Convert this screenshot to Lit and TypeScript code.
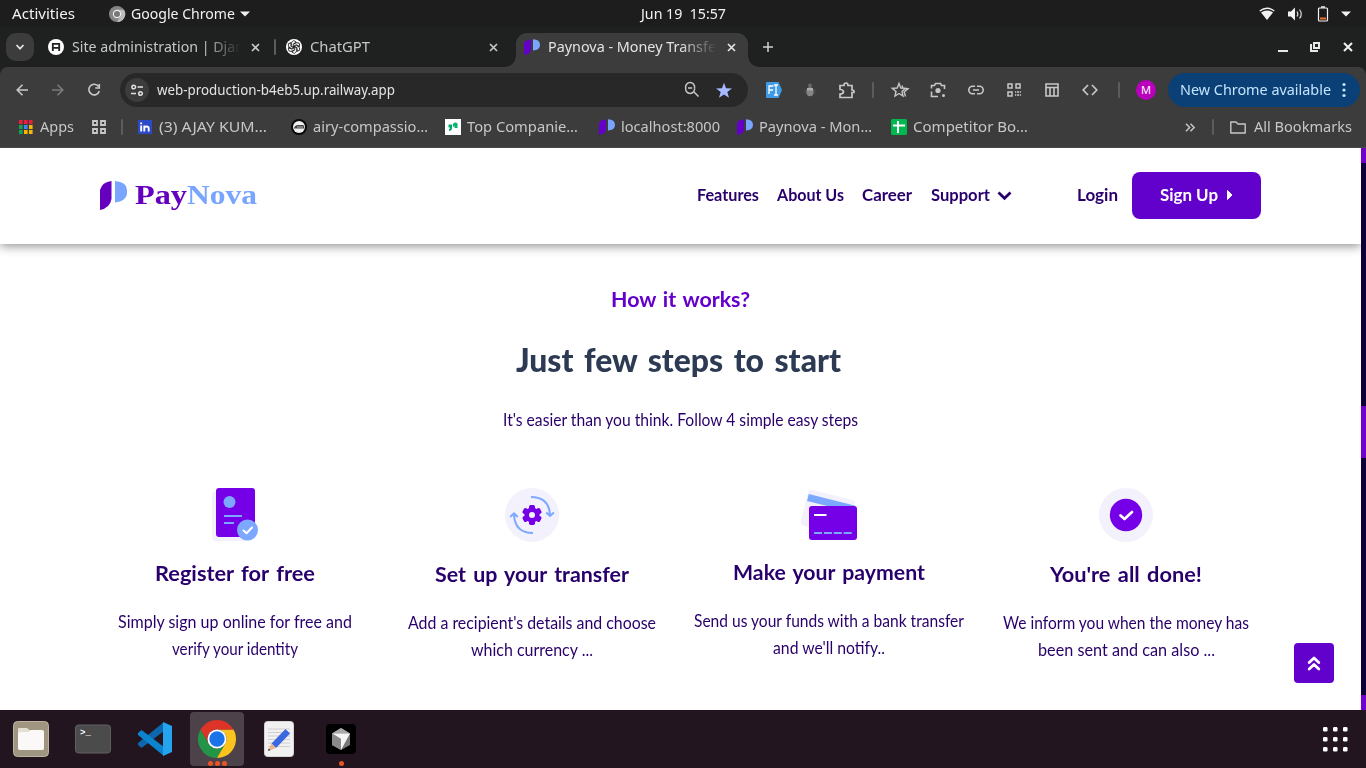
import { LitElement, html, svg, css } from 'lit';
import { customElement, property } from 'lit/decorators.js';

/** A run of text that is condensed or expanded to a known width. */
@customElement('fit-text')
class FitText extends LitElement {
  @property() text = '';
  @property({ type: Number }) w = 0;
  static styles = css`
    :host { display: block; white-space: pre; flex: none; }
    .run { display: inline-block; transform-origin: 0 50%; white-space: pre; }
  `;
  render() {
    return html`<span class="run">${this.text}</span>`;
  }
  updated() {
    const run = this.renderRoot.querySelector('.run') as HTMLElement;
    run.style.transform = 'none';
    const natural = run.getBoundingClientRect().width;
    this.style.width = `${this.w}px`;
    run.style.transform = `scaleX(${this.w / natural})`;
  }
}

const t = (text: string, w: number, cls = '') => html`<fit-text class=${cls} .text=${text} .w=${w}></fit-text>`;
const icon = (w: number, h: number, body: unknown, cls = '') =>
  html`<svg class="ic ${cls}" width=${w} height=${h} viewBox="0 0 ${w} ${h}">${body}</svg>`;

const paynova = () => icon(16, 16, svg`
  <path fill="#6500c9" d="M0 16V4.5Q.5 1 7 .5V11Q6.500 15 0 16Z"/>
  <path fill="#79a5ff" d="M9 .3Q16 .5 16 6Q16 11 9 11.500Z"/>`);
const cross = (cls = '') => icon(9, 9, svg`<path d="M1 1 8 8M8 1 1 8" stroke="currentColor" stroke-width="1.7" fill="none"/>`, cls);
const triangle = () => icon(10, 6, svg`<path d="M0 .5H10L5 5.500Z" fill="#f2f2f2"/>`);
const rule = () => html`<i class="rule"></i>`;

const registerIcon = icon(46, 53, svg`
  <rect x="0" y="4" width="38" height="49" rx="3" fill="#f3f1fb"/>
  <rect x="4" y="0" width="39" height="49" rx="3" fill="#7500e8"/>
  <circle cx="17.500" cy="14" r="6" fill="#7da8ff"/>
  <path d="M12 28H30M12 35H22" stroke="#7da8ff" stroke-width="1.8"/>
  <circle cx="35.500" cy="42" r="10.500" fill="#7da8ff"/>
  <path d="M31.500 42.500 34.500 45.300 40 39.500" stroke="#fff" stroke-width="2" fill="none" stroke-linecap="round" stroke-linejoin="round"/>`);
const teeth = [0, 60, 120, 180, 240, 300];
const transferIcon = icon(54, 54, svg`
  <circle cx="27" cy="27" r="27" fill="#f3f1fb"/>
  <g fill="#7500e8"><circle cx="27" cy="27" r="7.600"/>
  ${teeth.map((a) => svg`<rect x="24" y="17" width="6" height="7" rx="1.700" transform="rotate(${a} 27 27)"/>`)}</g>
  <circle cx="27" cy="27" r="3" fill="#f3f1fb"/>
  <path d="M26 9Q44 9 45 27M41.200 24.500 45 28 49 24.500M28 45Q10 45 9 27M5.200 29 9 25.300 12.800 29" fill="none" stroke="#7da8ff" stroke-width="2"/>`);
const paymentIcon = icon(56, 52, svg`
  <g transform="rotate(14 8 1)"><rect x="8" y="1" width="48" height="37" rx="4" fill="#f3f1fb"/><rect x="9" y="6" width="48" height="7" fill="#7da8ff"/></g>
  <rect x="8" y="18" width="48" height="34" rx="3" fill="#7500e8"/>
  <path d="M13 27H25.500" stroke="#fff" stroke-width="2"/>
  <path d="M13 45H51" stroke="#7da8ff" stroke-width="1.800" stroke-dasharray="8 1.900"/>`);
const doneIcon = icon(54, 54, svg`
  <circle cx="27" cy="27" r="27" fill="#f3f1fb"/><circle cx="27" cy="27" r="16.200" fill="#7500e8"/>
  <path d="M21.500 27.500 25.500 31 33 24" fill="none" stroke="#fff" stroke-width="2.700" stroke-linecap="round" stroke-linejoin="round"/>`);

const steps = [
  { art: registerIcon, title: 'Register for free', w: 160, lines: [['Simply sign up online for free and', 234], ['verify your identity', 126]] },
  { art: transferIcon, title: 'Set up your transfer', w: 194, lines: [["Add a recipient's details and choose", 248], ['which currency ...', 122]] },
  { art: paymentIcon, title: 'Make your payment', w: 192, lines: [['Send us your funds with a bank transfer', 270], ["and we'll notify..", 112]] },
  { art: doneIcon, title: "You're all done!", w: 152, lines: [['We inform you when the money has', 246], ['been sent and can also ...', 177]] },
] as { art: unknown; title: string; w: number; lines: [string, number][] }[];

@customElement('app-root')
class AppRoot extends LitElement {
  static styles = css`
    :host { display: flex; flex-direction: column; width: 1366px; height: 768px; overflow: hidden;
      font: 14px/20px "Noto Sans", "Open Sans", sans-serif; color: #e3e3e3; background: #fff; }
    * { box-sizing: border-box; }
    .ic { display: block; flex: none; overflow: visible; }
    .rule { display: block; width: 2px; height: 16px; background: #5c5c5c; border-radius: 1px; }
    .row { display: grid; align-items: center; flex: none; }

    .system { height: 27px; padding-left: 12px; background: #1d1d1d; color: #f2f2f2;
      grid-template-columns: 97px 22px 109px 401px 618px 29px 29px 24px 25px; }
    .tabs { height: 40px; background: #1f2120; color: #c7c7c7; padding-left: 6px;
      grid-template-columns: 42px 24px 179px 23px 12px 24px 179px 27px 247px 515px 32px 33px 23px; }
    .menu { width: 28px; height: 28px; border-radius: 10px; background: #3c3c3c; display: grid; place-items: center; }
    .fade { width: 173px; overflow: hidden; mask-image: linear-gradient(90deg, #000 132px, transparent 169px); }
    .tab { position: relative; height: 34px; align-self: end; width: 232px; background: #3c3c3c; border-radius: 11px 11px 0 0;
      display: grid; align-items: center; padding: 0 0 6px 8px; grid-template-columns: 24px 179px 20px; color: #e3e3e3; }
    .tab::before, .tab::after { content: ""; position: absolute; bottom: 0; width: 11px; height: 11px; }
    .tab::before { left: -11px; background: radial-gradient(circle at 0 0, transparent 10.5px, #3c3c3c 11px); }
    .tab::after { right: -11px; background: radial-gradient(circle at 100% 0, transparent 10.5px, #3c3c3c 11px); }

    .chrome { background: #3c3c3c; border-radius: 8px 8px 0 0; flex: none; height: 81px; border-bottom: 1px solid #4a4a4a; }
    .under { background: #1f2120; flex: none; }
    .toolbar { height: 46px; color: #c7c7c7; padding-left: 16px;
      grid-template-columns: 36px 35px 33px 646px 39px 33px 34px 19px 39px 38px 39px 38px 37px 36px 18px 32px 192px; }
    .omnibox { width: 628px; height: 34px; border-radius: 17px; background: #282828; display: grid; align-items: center;
      padding-left: 5px; grid-template-columns: 32px 528px 31px 20px; color: #e3e3e3; }
    .site { width: 24px; height: 24px; border-radius: 50%; background: #3c3c3c; display: grid; place-items: center; }
    .avatar { width: 20px; height: 20px; border-radius: 50%; background: #b900bd; color: #fff; font-size: 11px; text-align: center; }
    .update { height: 34px; border-radius: 17px; background: #0b4077; color: #c4e3fc; display: grid; align-items: center;
      padding-left: 12px; grid-template-columns: 162px 10px; }
    .bookmarks { height: 28px; color: #c7c7c7; padding-left: 19px;
      grid-template-columns: 21px 52px 29px 17px 21px 132px 22px 132px 22px 132px 22px 116px 22px 132px 22px 272px 27px 18px 24px 100px; }

    .main { display: grid; grid-template-columns: 1361px 5px; height: 562px; flex: none; position: relative; }
    .page { font-family: Lato, sans-serif; color: #29006b; overflow: hidden; background: #fff; }
    .header { height: 96px; background: #fff; box-shadow: 0 2px 10px rgba(0, 0, 0, .45); padding: 0 0 2px 100px;
      grid-template-columns: 35px 52px 510px 80px 85px 68.5px 66.5px 80px 55px 129px; font-size: 17px; font-weight: 700; }
    .brand { font: 700 28px/34px "Liberation Serif", serif; color: #6500bf; }
    .nova { color: #79a5ff; }
    .signup { height: 47px; border-radius: 8px; background: #6200cc; color: #fff; display: grid; align-items: center;
      grid-template-columns: 66px 10px; padding-left: 28px; }
    .intro { display: flex; flex-direction: column; align-items: center; padding-top: 40px; }
    .eyebrow { font-size: 21px; line-height: 30px; font-weight: 700; color: #6500cc; word-spacing: 1.5px; }
    .title { font-size: 32px; line-height: 44px; font-weight: 900; color: #2d3a53; margin-top: 24px; margin-right: 4px; word-spacing: 3px; }
    .copy { font-size: 16.5px; line-height: 27px; }
    .lead { margin-top: 25px; }
    .steps { display: grid; grid-template-columns: repeat(4, 297px); padding: 54px 0 0 86.5px; }
    .step { display: flex; flex-direction: column; align-items: center; }
    .name { font-size: 21px; line-height: 30px; font-weight: 700; margin: 17px 0 21px; word-spacing: 2px; }
    .scroll { background: #0d0038; display: grid; grid-template-rows: 15px 52px 15px; align-content: space-between; }
    .cap { background: #7300cc; }
    .thumb { background: #7300cc; margin: 3px 0 -3px; }
    .totop { position: absolute; left: 1294px; top: 495px; width: 40px; height: 40px; border-radius: 4px; background: #6200cc;
      display: grid; place-items: center; }

    .dock { height: 58px; background: #22151f; display: flex; flex: none; align-items: center; }
    .app { width: 62px; height: 58px; display: grid; place-items: center; position: relative; }
    .active::before { content: ""; position: absolute; inset: 2px 4px; border-radius: 4px; background: #4d424a; }
    .app .ic { position: relative; }
    .dots { position: absolute; bottom: 2.500px; left: 0; right: 0; display: flex; justify-content: center; gap: 2px; }
    .dot { width: 5px; height: 5px; border-radius: 50%; background: #e95420; }
    .prompt { font: 700 9px "Liberation Mono", monospace; }
    .grid { margin-left: auto; margin-right: 19px; }
  `;

  system() {
    return html`<div class="row system">
      ${t('Activities', 63)}
      ${icon(16, 16, svg`<circle cx="8" cy="8" r="8" fill="#858585"/><path d="M8 3.700H15A8 8 0 0 1 8 16L11.500 10.200Z" fill="#bcbcbc"/><circle cx="8" cy="8" r="4.200" fill="#eee"/><circle cx="8" cy="8" r="3" fill="#777"/>`)}
      ${t('Google Chrome', 104)} ${triangle()} ${t('Jun 19  15:57', 85)}
      ${icon(16, 14, svg`<path d="M.7 4Q8-1.500 15.300 4" stroke="#f2f2f2" fill="none" stroke-width="1.300"/><path d="M2 5.500Q8 1.600 14 5.500L8 13Z" fill="#f2f2f2"/>`)}
      ${icon(15, 14, svg`<path d="M0 4.500H3L7 .5V13.500L3 9.500H0Z" fill="#f2f2f2"/><path d="M9 4.500Q10.700 7 9 9.500M11.500 2.500Q15 7 11.500 11.500" stroke="#ddd" fill="none" stroke-width="1.200"/>`)}
      ${icon(11, 16, svg`<rect x="1.500" y="2" width="9" height="13" rx="1" fill="none" stroke="#f2f2f2" stroke-width="1.200"/><path d="M4 1H8" stroke="#f2f2f2" stroke-width="1.500"/><rect x="3" y="11.500" width="6" height="2" fill="#f0702c"/>`)}
      ${triangle()}
    </div>`;
  }

  tabs() {
    return html`<div class="row tabs">
      <div class="menu">${icon(10, 6, svg`<path d="M1.500 1 5 4.700 8.500 1" stroke="#e3e3e3" stroke-width="1.700" fill="none"/>`)}</div>
      ${icon(16, 16, svg`<circle cx="8" cy="8" r="8" fill="#fff"/><path d="M4.800 12V4.800H11.200V12M4.800 8.800H11.200" stroke="#222" stroke-width="1.800" fill="none"/>`)}
      <div class="fade">${t('Site administration | Djan', 172)}</div> ${cross()} ${rule()}
      ${icon(16, 16, svg`<circle cx="8" cy="8" r="8" fill="#fff"/><g fill="none" stroke="#222" stroke-width=".9">${teeth.map((a) => svg`<path transform="rotate(${a} 8 8)" d="M5.300 6.700V4.300Q7-.2 10.200 3.200L7.200 5V9"/>`)}</g>`)}
      ${t('ChatGPT', 60)} ${cross()}
      <div class="tab">${paynova()}<div class="fade">${t('Paynova - Money Transfe', 168)}</div>${cross()}</div>
      ${icon(10, 10, svg`<path d="M5 0V10M0 5H10" stroke="#d0d0d0" stroke-width="1.500"/>`)}
      ${icon(10, 10, svg`<path d="M0 9H10" stroke="#e8e8e8" stroke-width="2"/>`)}
      ${icon(10, 10, svg`<path d="M4 1H9V6H4ZM1 2V9H8" stroke="#e8e8e8" stroke-width="2" fill="none"/>`)}
      ${icon(10, 10, svg`<path d="M1 1 9 9M9 1 1 9" stroke="#f0f0f0" stroke-width="2"/>`)}
    </div>`;
  }

  toolbar() {
    const s = (d: string, w = 1.6) => svg`<path d=${d} fill="none" stroke="currentColor" stroke-width=${w}/>`;
    return html`<div class="row toolbar">
      ${icon(12, 12, s('M12 6H1M6.500 .7 1.200 6 6.500 11.300'))}
      ${icon(12, 12, svg`<g opacity=".45">${s('M0 6H11M5.500 .7 10.800 6 5.500 11.300')}</g>`)}
      ${icon(14, 14, s('M11.500 3.500A5.300 5.300 0 1 0 12.300 8M12.300 1V5H8.300'))}
      <div class="omnibox">
        <div class="site">${icon(14, 12, s('M5.500 3A1.800 1.800 0 1 1 1.900 3A1.800 1.800 0 1 1 5.500 3M7.500 3H13M1 9.500H6M12.300 9.500A1.800 1.800 0 1 1 8.700 9.500A1.800 1.800 0 1 1 12.300 9.500', 1.5))}</div>
        ${t('web-production-b4eb5.up.railway.app', 238)}
        ${icon(14, 14, svg`<g color="#c7c7c7">${s('M9.500 5A4.500 4.500 0 1 1 .7 5A4.500 4.500 0 1 1 9.500 5M8.300 8.300 13.500 13.500M3 5H7.200', 1.5)}</g>`)}
        ${icon(16, 16, svg`<path d="M8 .8 10 6.200 16 6.400 11.300 10 13 15.700 8 12.400 3 15.700 4.700 10 0 6.400 6 6.200Z" fill="#a8baff"/>`)}
      </div>
      ${icon(16, 16, svg`<path d="M1 0H12.500L16 8 12.500 16H1Q0 16 0 15V1Q0 0 1 0Z" fill="#3f9be8"/><path d="M3 12V4H7.500M3 8H7M8 3H12M10 3V13M8 13H12" stroke="#fff" stroke-width="1.300" fill="none"/>`)}
      ${icon(10, 14, svg`<circle cx="5" cy="2.500" r="2" fill="#666"/><ellipse cx="5" cy="8.800" rx="3.600" ry="4.500" fill="#858585"/><rect x="2" y="5" width="6" height="2.500" fill="#aaa"/><path d="M0 6V11M10 6V11" stroke="#4c4c4c"/>`)}
      ${icon(17, 17, s('M2 3.500H6Q6 1 8 1Q10 1 10 3.500H14V8Q16.500 8 16 10.500H14V15.500H2V12Q5.500 12 5.500 9.500Q5 7.500 2 7.500Z', 1.7))}
      ${rule()}
      ${icon(18, 16, s('M8 1.500 9.800 6 14.500 6.300 11 9.500 12 14 8 11.500 4 14 5 9.500 1.300 6.300 6.200 6ZM11 3.500 12 6.200 17 6.800 13.200 10 14.500 14.500', 1.4))}
      ${icon(16, 16, svg`${s('M1.500 6.500V3.500H4.500L5.500 1.500H10.500L11.500 3.500H14.500V7M1.500 9.500V14.500H8', 1.6)}<circle cx="8" cy="8.500" r="2.600" fill="currentColor"/><circle cx="13.500" cy="13.500" r="1.500" fill="currentColor"/>`)}
      ${icon(16, 10, s('M7 1.300H4.500A3.500 3.500 0 0 0 4.500 8.700H7M9 1.300H11.500A3.500 3.500 0 0 1 11.500 8.700H9M5 5H11', 1.6))}
      ${icon(14, 14, svg`${s('M1 1H5V5H1ZM9 1H13V5H9ZM1 9H5V13H1Z', 1.5)}${s('M8 9H14M8 12H14', 1.5)}<path d="M9.500 8V14M12.500 8V14" stroke="#3c3c3c" stroke-width=".8"/>`)}
      ${icon(14, 14, s('M1 1H13V13H1ZM1 4.500H13M5 4.500V13M9 4.500V13', 1.6))}
      ${icon(16, 12, s('M6 1 1.200 6 6 11M10 1 14.800 6 10 11', 1.7))}
      ${rule()}
      <div class="avatar">M</div>
      <div class="update">${t('New Chrome available', 151)}${icon(4, 16, svg`<circle cx="2" cy="2.500" r="1.600" fill="#c4e3fc"/><circle cx="2" cy="8" r="1.600" fill="#c4e3fc"/><circle cx="2" cy="13.500" r="1.600" fill="#c4e3fc"/>`)}</div>
    </div>`;
  }

  bookmarks() {
    const colors = ['#f01c3c', '#f01c3c', '#f01c3c', '#10a651', '#4285f4', '#fbb600', '#10a651', '#fbb600', '#fbb600'];
    return html`<div class="row bookmarks">
      ${icon(14, 14, colors.map((c, i) => svg`<rect x=${(i % 3) * 5} y=${Math.floor(i / 3) * 5} width="3.600" height="4" fill=${c}/>`))}
      ${t('Apps', 34)}
      ${icon(14, 14, svg`<path d="M1 1H5V5H1ZM9 1H13V5H9ZM1 9H5V13H1ZM9 9H13V13H9Z" stroke="#c7c7c7" stroke-width="1.800" fill="none"/>`)}
      ${rule()}
      ${icon(14, 14, svg`<rect width="14" height="14" fill="#2c49c8"/><path d="M3.200 5.500V11.500M6.300 11.500V5.500M6.300 8Q6.300 6.500 8.500 6.500Q10.700 6.500 10.700 8.500V11.500M3.200 2.500V4.200" stroke="#fff" stroke-width="1.900" fill="none"/>`)}
      ${t('(3) AJAY KUM…', 108)}
      ${icon(16, 16, svg`<circle cx="8" cy="8" r="8" fill="#080808"/><circle cx="8" cy="8" r="6" fill="#f1f1f1"/><path d="M3 9.500Q3.500 6 7 6H12.500L13.500 9.500Z" fill="#444"/><path d="M6 8H12" stroke="#bbb"/>`)}
      ${t('airy-compassio…', 115)}
      ${icon(16, 16, svg`<rect width="16" height="16" fill="#fff"/><path d="M3.500 5.500H7V9Q7 11.500 4 12V10Q5.500 9.500 5 8.500H3.500Z" fill="#00a968"/><path d="M8 8V5Q10 2.500 12.500 4.500V9H9.500V7Z" fill="#00b66e"/>`)}
      ${t('Top Companie…', 111)} ${paynova()} ${t('localhost:8000', 99)} ${paynova()} ${t('Paynova - Mon…', 113)}
      ${icon(16, 16, svg`<rect width="16" height="16" rx="1.500" fill="#00b84f"/><path d="M2 6.500H14M7 2V14" stroke="#fff" stroke-width="2"/>`)}
      ${t('Competitor Bo…', 115)}
      ${icon(10, 9, svg`<path d="M1 .7 4.700 4.500 1 8.300M5.500 .7 9.200 4.500 5.500 8.300" stroke="currentColor" stroke-width="1.500" fill="none"/>`)}
      ${rule()}
      ${icon(16, 13, svg`<path d="M.8 1H6L8 3H15.200V12H.8Z" stroke="currentColor" stroke-width="1.400" fill="none" stroke-linejoin="round"/>`)}
      ${t('All Bookmarks', 98)}
    </div>`;
  }

  header() {
    return html`<div class="row header">
      ${icon(27, 29, svg`<path fill="#6500bf" d="M0 29V9Q2 1 11.500 0V18Q10 27 0 29Z"/><path fill="#79a5ff" d="M15 0Q27 1 27 9V13Q26 20 15 21.500Z"/>`)}
      ${t('Pay', 52, 'brand')} ${t('Nova', 70, 'brand nova')}
      ${t('Features', 62)} ${t('About Us', 67)} ${t('Career', 50)} ${t('Support', 59)}
      ${icon(15, 9, svg`<path d="M1.500 1.500 7.500 7.300 13.500 1.500" stroke="#29006b" stroke-width="2.700" fill="none"/>`)}
      ${t('Login', 41)}
      <div class="signup">${t('Sign Up', 58)}${icon(7, 10, svg`<path d="M1.500 .5 6 5 1.500 9.500Z" fill="#fff" stroke="#fff" stroke-linejoin="round"/>`)}</div>
    </div>`;
  }

  dock() {
    return html`<div class="dock">
      <div class="app">${icon(36, 36, svg`<rect x=".5" y=".5" width="35" height="35" rx="4" fill="#9f9581" stroke="#bcb4a3"/><path d="M5 8Q5 7 6 7H14L17 9.500H29Q31 9.500 31 11V27Q31 29 29 29H7Q5 29 5 27Z" fill="#e5dfd3"/><path d="M5 12.500Q5 11 7 11H15L18 9H29Q31 9 31 11V27Q31 29 29 29H7Q5 29 5 27Z" fill="#faf9f7"/>`)}</div>
      <div class="app">${icon(36, 30, svg`<rect x=".5" y="1" width="35" height="28" rx="3" fill="#4b4b4b" stroke="#606060"/><text class="prompt" x="5" y="11" fill="#fff">&gt;_</text>`)}</div>
      <div class="app">${icon(34, 34, svg`<path d="M0 23 3.500 26 26 9V0L0 21Z" fill="#0c67ae"/><path d="M0 11 3.500 8 26 25V34L0 13Z" fill="#0c83cf"/><path d="M25 0 34 4V30L25 34Z" fill="#24a3ef"/>`)}</div>
      <div class="app active">${icon(38, 38, svg`<g transform="scale(.7917)"><path fill="#249546" d="M3.200 12A24 24 0 0 0 24 48L34.400 30A12 12 0 0 1 13.600 30Z"/><path fill="#fcc31c" d="M24 48A24 24 0 0 0 44.780 12H24A12 12 0 0 1 34.400 30Z"/><path fill="#de3428" d="M44.780 12A24 24 0 0 0 3.200 12L13.600 30A12 12 0 0 1 24 12Z"/><circle cx="24" cy="24" r="12" fill="#fff"/><circle cx="24" cy="24" r="9.700" fill="#1a73e8"/></g>`)}
        <div class="dots"><i class="dot"></i><i class="dot"></i><i class="dot"></i></div></div>
      <div class="app">${icon(30, 36, svg`<rect x=".5" y=".5" width="29" height="35" rx="3" fill="#f1f1f1" stroke="#d5d5d5"/><path d="M4 8H26M4 11.500H26M4 15H26M4 18.500H26M4 22H26M4 25.500H26" stroke="#cfcfcf"/><path d="M21.500 8 26 12.500 12 27 7.500 22.500Z" fill="#3b68e0"/><path d="M7.500 22.500 12 27 4 30Z" fill="#e9b58d"/><path d="M4 30 4.800 27.500 6.500 29Z" fill="#333"/>`)}</div>
      <div class="app">${icon(30, 30, svg`<rect width="30" height="30" rx="4" fill="#000"/><path d="M15 4 24 9.500V21L15 26 6 21V9.500Z" fill="#777"/><path d="M15 4 24 9.500H6Z" fill="#aaa"/><path d="M6 9.500H24L15 26V15Z" fill="#f5f5f5"/><path d="M6 9.500 15 15V26L6 21Z" fill="#8a8a8a"/>`)}
        <div class="dots"><i class="dot"></i></div></div>
      <div class="grid">${icon(24, 24, [0, 1, 2].map((r) => [0, 1, 2].map((c) => svg`<rect x=${c * 10} y=${r * 10} width="4.500" height="4.500" rx="1.200" fill="#fff"/>`)))}</div>
    </div>`;
  }

  render() {
    return html`${this.system()}${this.tabs()}
      <div class="under"><div class="chrome">${this.toolbar()}${this.bookmarks()}</div></div>
      <div class="main">
        <div class="page">
          ${this.header()}
          <div class="intro">
            ${t('How it works?', 139, 'eyebrow')}
            ${t('Just few steps to start', 325, 'title')}
            ${t("It's easier than you think. Follow 4 simple easy steps", 355, 'copy lead')}
          </div>
          <div class="steps">
            ${steps.map((s) => html`<div class="step">${s.art}${t(s.title, s.w, 'name')}${s.lines.map(([line, w]) => t(line, w, 'copy'))}</div>`)}
          </div>
        </div>
        <div class="scroll"><i class="cap"></i><i class="thumb"></i><i class="cap"></i></div>
        <div class="totop">${icon(14, 16, svg`<path d="M2.200 7.500 7 3 11.800 7.500M2.200 14 7 9.500 11.800 14" stroke="#fff" stroke-width="2.800" fill="none" stroke-linecap="round" stroke-linejoin="round"/>`)}</div>
      </div>
      ${this.dock()}`;
  }
}
